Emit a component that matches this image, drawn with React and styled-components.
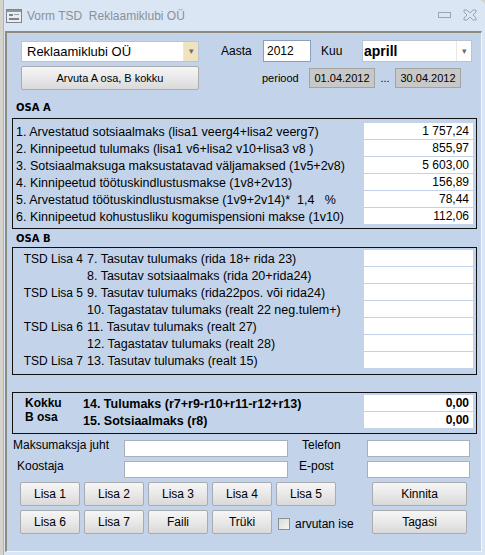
import styled, { createGlobalStyle } from 'styled-components';

const GlobalStyle = createGlobalStyle`
  html, body {
    margin: 0;
    padding: 0;
    background: #d6d3cc;
  }
  body {
    font-family: "Liberation Sans", Arial, sans-serif;
    font-size: 12px;
    color: #000;
  }
`;

const rowsA = [
  ['1. Arvestatud sotsiaalmaks (lisa1 veerg4+lisa2 veerg7)', '1 757,24'],
  ['2. Kinnipeetud tulumaks (lisa1 v6+lisa2 v10+lisa3 v8 )', '855,97'],
  ['3. Sotsiaalmaksuga maksustatavad väljamaksed (1v5+2v8)', '5 603,00'],
  ['4. Kinnipeetud töötuskindlustusmakse (1v8+2v13)', '156,89'],
  ['5. Arvestatud töötuskindlustusmakse (1v9+2v14)*  1,4   %', '78,44'],
  ['6. Kinnipeetud kohustusliku kogumispensioni makse (1v10)', '112,06'],
];

const rowsB = [
  ['TSD Lisa 4', '7. Tasutav tulumaks (rida 18+ rida 23)'],
  ['', '8. Tasutav sotsiaalmaks (rida 20+rida24)'],
  ['TSD Lisa 5', '9. Tasutav tulumaks (rida22pos. või rida24)'],
  ['', '10. Tagastatav tulumaks (realt 22 neg.tulem+)'],
  ['TSD Lisa 6', '11. Tasutav tulumaks (realt 27)'],
  ['', '12. Tagastatav tulumaks (realt 28)'],
  ['TSD Lisa 7', '13. Tasutav tulumaks (realt 15)'],
];

const WindowIcon = () => (
  <svg width="16" height="14" viewBox="0 0 16 14">
    <rect x="0.5" y="0.5" width="15" height="13" fill="#e8edf3" stroke="#7d848c" />
    <rect x="1" y="1" width="14" height="2" fill="#8f969e" />
    <rect x="3" y="5" width="4" height="2" fill="#7d848c" />
    <rect x="8" y="5" width="5" height="1" fill="#9aa1a9" />
    <rect x="3" y="9" width="10" height="2" fill="#7d848c" />
  </svg>
);

const MinIcon = () => (
  <svg width="13" height="6" viewBox="0 0 13 6">
    <rect x="0.5" y="0.5" width="12" height="5" fill="none" stroke="#9aa4b1" />
  </svg>
);

const CloseIcon = () => (
  <svg width="14" height="12" viewBox="0 0 14 12">
    <path
      d="M1 1h3l3 3 3-3h3v2l-3 3 3 3v2h-3l-3-3-3 3H1V9l3-3-3-3z"
      fill="none"
      stroke="#9aa4b1"
    />
  </svg>
);

const App = () => {
  return (
    <>
      <GlobalStyle />
      <Window>
        <TitleBar>
          <WindowIcon />
          <Title>Vorm TSD&nbsp; Reklaamiklubi OÜ</Title>
          <TitleButtons>
            <MinIcon />
            <CloseIcon />
          </TitleButtons>
        </TitleBar>

        <Client>
          <HeaderRow>
            <Combo $width={178} $height={21}>
              <ComboText>Reklaamiklubi OÜ</ComboText>
              <ComboArrow $yellow>▾</ComboArrow>
            </Combo>
            <Label $width={42} $pad={22}>Aasta</Label>
            <Input $width={48} $height={22}>2012</Input>
            <Label $width={41} $pad={10}>Kuu</Label>
            <Combo $width={110} $height={22}>
              <ComboText $bold>aprill</ComboText>
              <ComboArrow>▾</ComboArrow>
            </Combo>
          </HeaderRow>

          <HeaderRow $top={4}>
            <Button $width={178} $height={24} $small>Arvuta A osa, B kokku</Button>
            <Label $width={47} $pad={63} $small>periood</Label>
            <DateField>01.04.2012</DateField>
            <Dots>...</Dots>
            <DateField>30.04.2012</DateField>
          </HeaderRow>

          <Heading $height={28} $bottom={4}>OSA A</Heading>
          <Box $top={4} $bottom={3}>
            {rowsA.map(([label, value]) => (
              <Row key={label}>
                <RowLabel>{label}</RowLabel>
                <Value>{value}</Value>
              </Row>
            ))}
          </Box>

          <Heading $height={18} $bottom={2}>OSA B</Heading>
          <Box $top={2} $bottom={5}>
            {rowsB.map(([group, label]) => (
              <Row key={label}>
                <GroupLabel>{group}</GroupLabel>
                <RowLabel>{label}</RowLabel>
                <Value />
              </Row>
            ))}
          </Box>

          <TotalBox $top={2} $bottom={4}>
            <TotalCaption>
              <span>Kokku</span>
              <span>B osa</span>
            </TotalCaption>
            <TotalRows>
              <Row>
                <RowLabel $bold>14. Tulumaks (r7+r9-r10+r11-r12+r13)</RowLabel>
                <Value $bold>0,00</Value>
              </Row>
              <Row>
                <RowLabel $bold>15. Sotsiaalmaks (r8)</RowLabel>
                <Value $bold>0,00</Value>
              </Row>
            </TotalRows>
          </TotalBox>

          <FormGrid>
            <FormLabel $pad={6}>Maksumaksja juht</FormLabel>
            <TextInput />
            <FormLabel $pad={14}>Telefon</FormLabel>
            <TextInput />
            <FormLabel $pad={10}>Koostaja</FormLabel>
            <TextInput />
            <FormLabel $pad={11}>E-post</FormLabel>
            <TextInput />
          </FormGrid>

          <ButtonGrid>
            <Button>Lisa 1</Button>
            <Button>Lisa 2</Button>
            <Button>Lisa 3</Button>
            <Button>Lisa 4</Button>
            <Button>Lisa 5</Button>
            <WideButton>Kinnita</WideButton>
            <Button>Lisa 6</Button>
            <Button>Lisa 7</Button>
            <Button>Faili</Button>
            <Button>Trüki</Button>
            <CheckLabel>
              <CheckBox />
              arvutan ise
            </CheckLabel>
            <WideButton>Tagasi</WideButton>
          </ButtonGrid>
        </Client>
      </Window>
    </>
  );
};

const Window = styled.div`
  margin-left: 3px;
  width: 482px;
  height: 555px;
  box-sizing: border-box;
  background: #dbe6f4;
  border-left: 1px solid #aab6c6;
  border-top-right-radius: 6px;
  display: flex;
  flex-direction: column;
`;

const TitleBar = styled.div`
  height: 31px;
  display: flex;
  align-items: center;
  padding: 0 8px 0 2px;
  gap: 5px;
  box-sizing: border-box;
`;

const Title = styled.span`
  font-size: 12px;
  color: #8a9099;
  flex: 1;
`;

const TitleButtons = styled.div`
  display: flex;
  align-items: center;
  gap: 12px;
  margin-bottom: 2px;
`;

const Client = styled.div`
  margin-left: 1px;
  width: 477px;
  height: 521px;
  box-sizing: border-box;
  background: #c3d4ea;
  border-top: 2px solid #8f8b7d;
  border-left: 2px solid #8f8b7d;
  border-right: 1px solid #f2f6fb;
  border-bottom: 1px solid #f2f6fb;
  display: flex;
  flex-direction: column;
`;

const HeaderRow = styled.div`
  display: flex;
  align-items: center;
  padding-left: 14px;
  margin-top: ${(p) => p.$top ?? 7}px;
`;

const Combo = styled.div`
  width: ${(p) => p.$width}px;
  height: ${(p) => p.$height}px;
  box-sizing: border-box;
  background: #fff;
  border: 1px solid #b9c4d2;
  display: flex;
  align-items: stretch;
`;

const ComboText = styled.span`
  flex: 1;
  display: flex;
  align-items: center;
  padding-left: ${(p) => (p.$bold ? 1 : 5)}px;
  font-size: ${(p) => (p.$bold ? 14 : 13)}px;
  font-weight: ${(p) => (p.$bold ? 'bold' : 'normal')};
`;

const ComboArrow = styled.span`
  width: 14px;
  display: flex;
  align-items: center;
  justify-content: center;
  font-size: 9px;
  color: #6c6c6c;
  background: ${(p) => (p.$yellow ? '#efe3bf' : '#fff')};
  border-left: 1px solid #e8e8e8;
`;

const Label = styled.span`
  width: ${(p) => p.$width}px;
  margin-left: ${(p) => p.$pad}px;
  font-size: ${(p) => (p.$small ? 11 : 12)}px;
  box-sizing: border-box;
`;

const Input = styled.div`
  width: ${(p) => p.$width}px;
  height: ${(p) => p.$height}px;
  box-sizing: border-box;
  background: #fff;
  border: 1px solid #8aa0b8;
  display: flex;
  align-items: center;
  padding-left: 3px;
  font-size: 12px;
`;

const DateField = styled.div`
  width: 66px;
  height: 20px;
  box-sizing: border-box;
  background: #c8c8c8;
  border: 1px solid #a3a3a3;
  display: flex;
  align-items: center;
  justify-content: center;
  font-size: 11px;
`;

const Dots = styled.span`
  width: 20px;
  text-align: center;
  font-size: 11px;
`;

const Button = styled.div`
  width: ${(p) => (p.$width ? `${p.$width}px` : 'auto')};
  height: ${(p) => p.$height ?? 24}px;
  box-sizing: border-box;
  border: 1px solid #a9acaf;
  border-radius: 2px;
  background: linear-gradient(#f6f6f6, #e7e7e7 55%, #d9d9d9);
  display: flex;
  align-items: center;
  justify-content: center;
  font-size: ${(p) => (p.$small ? 11 : 12)}px;
`;

const WideButton = styled(Button)`
  margin-left: 32px;
`;

const Heading = styled.div`
  height: ${(p) => p.$height}px;
  box-sizing: border-box;
  padding: 0 0 ${(p) => p.$bottom}px 9px;
  display: flex;
  align-items: flex-end;
  font-family: "DejaVu Sans", Verdana, sans-serif;
  font-size: 10px;
  font-weight: bold;
  line-height: 12px;
`;

const Box = styled.div`
  margin-left: 5px;
  width: 465px;
  box-sizing: border-box;
  border: 1px solid #111;
  padding: ${(p) => p.$top}px 3px ${(p) => p.$bottom}px 0;
  display: flex;
  flex-direction: column;
  font-size: 12.5px;
`;

const TotalBox = styled(Box)`
  margin-top: 17px;
  flex-direction: row;
`;

const TotalCaption = styled.div`
  width: 67px;
  display: flex;
  flex-direction: column;
  padding: 1px 0 0 12px;
  box-sizing: border-box;
  font-size: 12px;
  font-weight: bold;
  line-height: 14px;
`;

const TotalRows = styled.div`
  flex: 1;
  display: flex;
  flex-direction: column;
`;

const Row = styled.div`
  height: 17px;
  display: flex;
  align-items: stretch;
`;

const RowLabel = styled.span`
  flex: 1;
  display: flex;
  align-items: center;
  padding-left: 3px;
  white-space: pre;
  font-weight: ${(p) => (p.$bold ? 'bold' : 'normal')};
`;

const GroupLabel = styled.span`
  width: 71px;
  display: flex;
  align-items: center;
  justify-content: flex-end;
  padding-right: 1px;
  box-sizing: border-box;
  font-size: 12px;
`;

const Value = styled.span`
  width: 109px;
  margin-bottom: 1px;
  background: #fff;
  display: flex;
  align-items: center;
  justify-content: flex-end;
  padding-right: 4px;
  box-sizing: border-box;
  font-size: 12px;
  font-weight: ${(p) => (p.$bold ? 'bold' : 'normal')};
`;

const FormGrid = styled.div`
  margin-top: 6px;
  display: grid;
  grid-template-columns: 117px 164px 79px 103px;
  grid-auto-rows: 17px;
  row-gap: 4px;
  align-items: center;
`;

const FormLabel = styled.span`
  padding-left: ${(p) => p.$pad}px;
  margin-top: -8px;
  white-space: nowrap;
`;

const TextInput = styled.div`
  height: 17px;
  box-sizing: border-box;
  background: #fff;
  border: 1px solid #a7b0bb;
`;

const ButtonGrid = styled.div`
  margin-top: 4px;
  padding-left: 13px;
  display: grid;
  grid-template-columns: repeat(5, 60px) 127px;
  grid-auto-rows: 24px;
  column-gap: 4px;
  row-gap: 4px;
`;

const CheckLabel = styled.label`
  display: flex;
  align-items: center;
  gap: 5px;
  padding-left: 2px;
  padding-top: 3px;
  white-space: nowrap;
`;

const CheckBox = styled.span`
  flex-shrink: 0;
  width: 12px;
  height: 12px;
  box-sizing: border-box;
  border: 1px solid #8b9097;
  background: linear-gradient(135deg, #dcdcd6, #f5f5f2);
`;

export default App;
